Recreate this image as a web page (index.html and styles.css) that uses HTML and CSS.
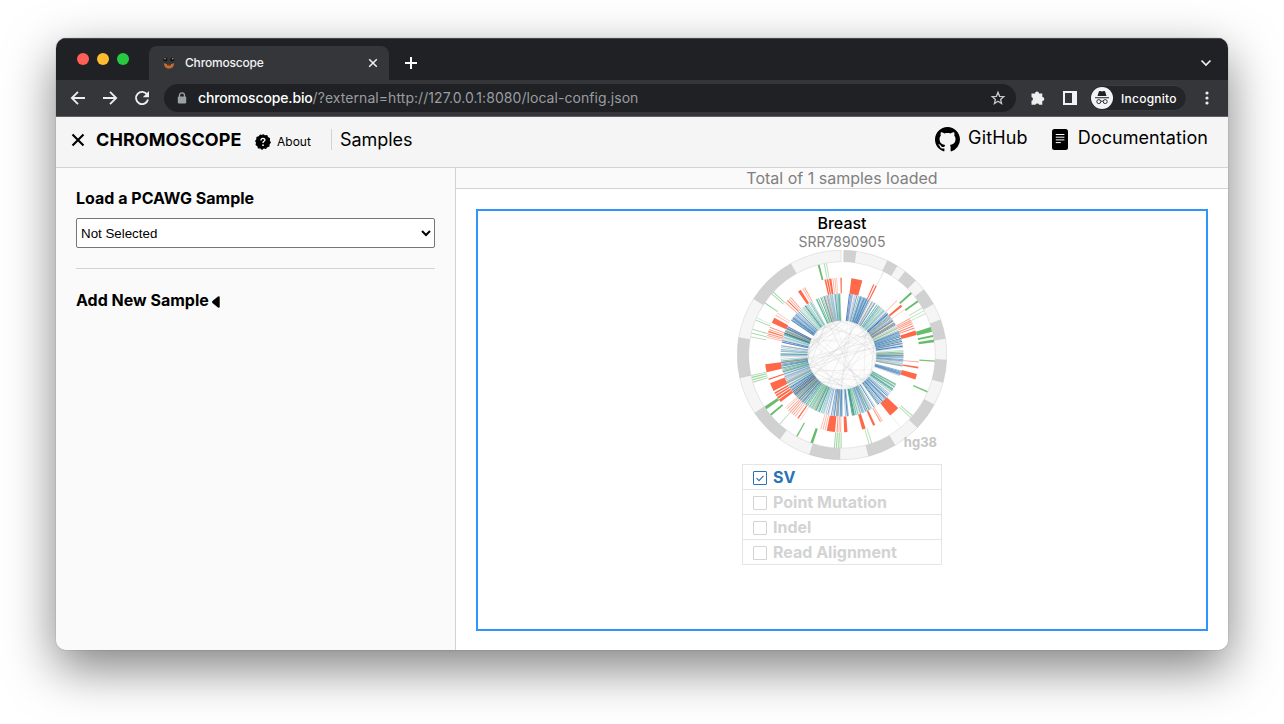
FILE: index.html
```html
<!DOCTYPE html>
<html lang="en">
<head>
<meta charset="utf-8">
<title>Chromoscope</title>
<link rel="stylesheet" href="styles.css">
</head>
<body>
<div class="window">
  <div class="tabstrip">
    <div class="lights"><i class="light red"></i><i class="light amber"></i><i class="light green"></i></div>
    <div class="tab">
      <svg class="favicon" width="14" height="14" viewBox="0 0 14 14"><circle cx="3.3" cy="3.5" r="2" fill="#111"/><circle cx="10.4" cy="3.5" r="2" fill="#111"/><circle cx="3" cy="2.8" r=".8" fill="#a5b1bb"/><circle cx="10.8" cy="2.8" r=".8" fill="#a5b1bb"/><path d="M2 7l2 1h6l2-1c0 4-2 5.500-5 5.500S2 11 2 7z" fill="#c56c35"/><path d="M5 8h4v1.500H5z" fill="#54382a"/></svg>
      <span class="tab-title">Chromoscope</span>
      <svg width="10" height="10" viewBox="0 0 10 10"><path d="M1.200 1.200l7.600 7.600M8.800 1.200L1.200 8.800" stroke="#f1f1f1" stroke-width="1.500"/></svg>
    </div>
    <svg class="newtab" width="14" height="14" viewBox="0 0 14 14"><path d="M7 1v12M1 7h12" stroke="#fff" stroke-width="2"/></svg>
    <svg class="tabsearch" width="12" height="8" viewBox="0 0 12 8"><path d="M1.500 1.500L6 6l4.500-4.500" fill="none" stroke="#eee" stroke-width="1.700"/></svg>
  </div>
  <div class="toolbar">
    <svg width="16" height="16" viewBox="0 0 16 16"><path d="M15 8H2M8 1.800L1.800 8 8 14.200" fill="none" stroke="#eee" stroke-width="1.800"/></svg>
    <svg width="16" height="16" viewBox="0 0 16 16"><path d="M1 8h13M8 1.800L14.200 8 8 14.200" fill="none" stroke="#eee" stroke-width="1.800"/></svg>
    <svg width="16" height="16" viewBox="0 0 16 16"><path d="M13.200 4.600A6.100 6.100 0 1 0 14 9.500" fill="none" stroke="#eee" stroke-width="1.900"/><path d="M15 1v6.200H8.800z" fill="#eee"/></svg>
    <div class="address">
      <svg width="10" height="12" viewBox="0 0 10 12"><path d="M2.500 5V3.300a2.500 2.500 0 0 1 5 0V5" fill="none" stroke="#9aa0a6" stroke-width="1.300"/><rect x=".8" y="4.500" width="8.400" height="7" rx="1" fill="#9aa0a6"/></svg>
      <span class="url"><b>chromoscope.bio</b>/?external=http://127.0.0.1:8080/local-config.json</span>
      <svg width="16" height="16" viewBox="0 0 16 16"><path d="M8 2.300l1.600 4 4.200.3-3.200 2.800 1 4.100L8 11.300l-3.600 2.200 1-4.100-3.200-2.800 4.200-.3z" fill="none" stroke="#c4c7c9" stroke-width="1.300"/></svg>
    </div>
    <svg class="ext" width="16" height="16" viewBox="0 0 16 16"><path d="M2.500 3.500H5a2 2 0 1 1 4 0h3.300v3.600a2 2 0 1 1 0 4v3.700H9.200a2 2 0 0 0-3.800 0H1.500v-4a1.900 1.900 0 0 0 0-3.700V3.500z" fill="#eee"/></svg>
    <svg class="panel" width="14" height="14" viewBox="0 0 14 14"><path d="M0 0h14v14H0zM2 2v10h7V2z" fill="#f1f3f4" fill-rule="evenodd"/></svg>
    <div class="incognito">
      <svg width="22" height="22" viewBox="0 0 22 22"><circle cx="11" cy="11" r="11" fill="#f1f3f4"/><path d="M4 10.300h14v1H4zM6.500 9l1.300-4.300q.3-1 1.300-.6l1.900.5 1.900-.5q1-.4 1.300.6L15.500 9z" fill="#202124"/><g fill="none" stroke="#202124" stroke-width=".9"><circle cx="7.800" cy="14.600" r="2"/><circle cx="14.200" cy="14.600" r="2"/><path d="M9.800 14.400q1.200-.8 2.400 0"/></g></svg>
      <span>Incognito</span>
    </div>
    <svg class="more" width="4" height="14" viewBox="0 0 4 14" fill="#eee"><circle cx="2" cy="2" r="1.600"/><circle cx="2" cy="7" r="1.600"/><circle cx="2" cy="12" r="1.600"/></svg>
  </div>
  <header class="header">
    <svg class="close" width="14" height="14" viewBox="0 0 14 14"><path d="M1.500 1.500l11 11M12.500 1.500l-11 11" stroke="#000" stroke-width="2.100"/></svg>
    <span class="brand">CHROMOSCOPE</span>
    <svg class="help" width="16" height="16" viewBox="0 0 16 16"><path d="M8 0l1.900 1.200 2.300-.2.900 2.100 2 1.100-.3 2.300L16 8.400l-1.400 1.800-.1 2.300-2.200.7L11 15l-2.200-.4L7 16l-1.700-1.500-2.300-.1-.7-2.200L.5 11l.5-2.200L0 7l1.300-1.800.1-2.300 2.200-.7L5.100.6l2.100.5z"/><path d="M6 6.400C6 3.800 10 4 9.900 6c-.1 1.300-1.900 1.400-1.900 2.900" fill="none" stroke="#fff" stroke-width="1.300"/><circle cx="8" cy="11.200" r=".9" fill="#fff"/></svg>
    <span class="about">About</span>
    <span class="samples">Samples</span>
    <div class="links">
      <svg width="25" height="25" viewBox="0 0 16 16"><path fill-rule="evenodd" d="M8 0C3.580 0 0 3.580 0 8c0 3.540 2.290 6.530 5.470 7.590.4.070.55-.17.55-.38 0-.19-.01-.82-.01-1.490-2.010.37-2.530-.49-2.690-.94-.09-.23-.48-.94-.82-1.130-.28-.15-.68-.52-.01-.53.63-.01 1.080.58 1.230.82.72 1.210 1.870.87 2.330.66.07-.52.28-.87.51-1.070-1.780-.2-3.640-.89-3.640-3.950 0-.87.31-1.590.82-2.150-.08-.2-.36-1.020.08-2.120 0 0 .67-.21 2.200.82.64-.18 1.320-.27 2-.27s1.360.09 2 .27c1.530-1.040 2.200-.82 2.200-.82.44 1.100.16 1.920.08 2.120.51.56.82 1.270.82 2.150 0 3.070-1.870 3.750-3.650 3.950.29.25.54.73.54 1.480 0 1.070-.01 1.930-.01 2.200 0 .21.15.46.55.38A8.010 8.010 0 0 0 16 8c0-4.420-3.580-8-8-8z"/></svg>
      <span class="gh">GitHub</span>
      <svg class="doc" width="16" height="21" viewBox="0 0 16 21"><rect width="16" height="21" rx="2.500"/><path d="M3.800 5.500h8.600M3.800 8.200h8.600M3.800 10.900h8.600M3.800 13.600h5" stroke="#fff" stroke-width="1"/></svg>
      <span class="docs">Documentation</span>
    </div>
  </header>
  <div class="content">
    <aside class="sidebar">
      <h2 class="load">Load a PCAWG Sample</h2>
      <select class="select"><option>Not Selected</option></select>
      <hr class="rule">
      <h2 class="add">Add New Sample <svg width="8" height="12" viewBox="0 0 8 12"><path d="M0 6.200Q0 5.500 1 4.600L6 .5Q7.700-.4 7.700 1.500v9q0 1.700-1.700 1L1 7.500Q0 6.700 0 6.200z"/></svg></h2>
    </aside>
    <main class="main">
      <div class="total">Total of 1 samples loaded</div>
      <div class="gallery">
        <section class="card">
          <div class="cancer">Breast</div>
          <div class="sample">SRR7890905</div>
          <div class="plot">
            <svg id="circos" width="210" height="212" viewBox="-105 -105 210 212"></svg>
            <span class="assembly">hg38</span>
          </div>
          <ul class="tracks">
            <li class="on"><svg width="14" height="14" viewBox="0 0 14 14"><rect x=".5" y=".5" width="13" height="13" rx=".5" fill="none" stroke="#2a73b5"/><path d="M3.500 7.100l2.500 2.500 4.500-4.800" fill="none" stroke="#2a73b5" stroke-width="1.200"/></svg>SV</li>
            <li><i class="box"></i>Point Mutation</li>
            <li><i class="box"></i>Indel</li>
            <li><i class="box"></i>Read Alignment</li>
          </ul>
        </section>
      </div>
    </main>
  </div>
</div>
<script src="circos.js"></script>
</body>
</html>
```

FILE: styles.css
```css
* { box-sizing: border-box; }
body { margin: 0; height: 724px; overflow: hidden; background: #fff; font-family: Inter, "Liberation Sans", sans-serif; color: #000; padding: 38px 56px 0; }
svg { display: block; flex: none; }
.window { width: 1172px; height: 612px; border-radius: 10px; overflow: hidden; display: flex; flex-direction: column; box-shadow: 0 0 1px rgba(0,0,0,.6), 0 18px 50px rgba(0,0,0,.5); }
.tabstrip { height: 42px; flex: none; background: #202124; display: flex; align-items: flex-end; border-top: 1px solid #47484a; }
.lights { display: flex; gap: 8px; padding-left: 21px; width: 93px; height: 27px; }
.light { width: 12px; height: 12px; border-radius: 50%; }
.red { background: #ff5f57; }
.amber { background: #febc2e; }
.green { background: #28c840; }
.tab { width: 240px; height: 34px; border-radius: 8px 8px 0 0; background: #35363a; display: flex; align-items: center; padding: 0 11px 0 13px; color: #f1f3f4; font-size: 12px; }
.tab-title { flex: 1; padding: 0 0 2px 9px; font-weight: 500; letter-spacing: -.18px; }
.newtab { margin: 0 auto 10px 15px; }
.tabsearch { margin: 0 16px 13px 0; }
.toolbar { height: 37px; flex: none; background: #35363a; border-bottom: 1px solid #5f6063; display: flex; align-items: center; padding: 0 19px 0 14px; gap: 16px; }
.address { width: 852px; flex: none; height: 28px; border-radius: 14px; background: #202124; display: flex; align-items: center; padding: 0 10px 0 13px; margin-left: -2px; }
.url { flex: 1; padding: 0 0 2px 11px; font-size: 14px; color: #9a9da0; letter-spacing: .06px; }
.url b { font-weight: 500; color: #fff; letter-spacing: -.15px; }
.ext { margin-left: -2px; }
.panel { margin-left: 1px; }
.incognito { height: 26px; width: 98px; flex: none; border: 1px solid #3b3c40; border-radius: 13px; background: #242528; display: flex; align-items: center; gap: 8px; color: #fff; font-size: 12px; font-weight: 500; letter-spacing: .25px; padding-left: 1px; margin-left: -4px; }
.more { margin-left: 2px; }
.header { height: 51px; flex: none; background: #f5f5f5; border-bottom: 1px solid #d3d3d3; display: flex; align-items: center; padding: 0 20px 5px 15px; }
.brand { font-size: 18px; font-weight: 700; margin-left: 11px; width: 159px; letter-spacing: .08px; }
.help { margin-top: 5px; }
.about { font-size: 12px; margin: 4px 0 0 6px; width: 54px; }
.samples { font-size: 18px; border-left: 1px solid #d3d3d3; padding-left: 8px; height: 21px; line-height: 21px; letter-spacing: -.05px; }
.links { margin-left: auto; display: flex; align-items: center; font-size: 18px; }
.gh { margin: -4px 24px 0 8px; letter-spacing: .15px; }
.docs { margin: -4px 0 0 10px; letter-spacing: .07px; }
.content { flex: 1; display: flex; min-height: 0; }
.sidebar { width: 400px; background: #fafafa; border-right: 1px solid #d3d3d3; padding: 20px; }
.load, .add { font-size: 16px; line-height: 20px; margin: 0; font-weight: 700; }
.select { display: block; width: 359px; height: 30px; margin: 10px 0 20px; font-family: "Liberation Sans", sans-serif; font-size: 13.333px; background: #fff; border: 1px solid #767676; border-radius: 2px; color: #000; }
.rule { border: 0; border-top: 1px solid #d3d3d3; margin: 0 0 21px; }
.add { display: flex; align-items: center; gap: 3px; }
.add svg { margin-top: 3px; }
.main { flex: 1; background: #fff; display: flex; flex-direction: column; }
.total { height: 21px; background: #fafafa; border-bottom: 1px solid #d3d3d3; text-align: center; color: #808080; font-size: 16px; line-height: 21px; }
.gallery { flex: 1; padding: 20px; }
.card { width: 732px; height: 422px; border: 2px solid #2f94fb; display: flex; flex-direction: column; align-items: center; }
.cancer { font-size: 16px; line-height: 20px; height: 21px; margin-top: 2px; font-weight: 500; }
.sample { font-size: 14px; line-height: 16px; height: 16px; color: #808080; }
.plot { position: relative; width: 210px; height: 214px; }
.assembly { position: absolute; right: 10px; top: 184px; font-size: 13px; line-height: 16px; font-weight: 700; color: #c5c5c5; }
.tracks { list-style: none; margin: 0; padding: 0; width: 200px; border: 1px solid #e5e5e5; border-bottom: 0; font-size: 16px; font-weight: 700; color: #d3d3d3; }
.tracks li { height: 25px; border-bottom: 1px solid #e5e5e5; display: flex; align-items: center; gap: 6px; padding-left: 10px; }
.tracks .on { color: #2a73b5; }
.box { width: 14px; height: 14px; border: 1px solid #d3d3d3; border-radius: 1px; margin-top: 1px; }
.on svg { margin-top: 1px; }
```

FILE: circos.js
```js
const svg = document.getElementById('circos');
const NS = 'http://www.w3.org/2000/svg';
const pt = (r, deg) => {
  const a = deg * Math.PI / 180;
  return (r * Math.sin(a)).toFixed(2) + ' ' + (-r * Math.cos(a)).toFixed(2);
};
function add(tag, attrs) {
  const el = document.createElementNS(NS, tag);
  for (const k in attrs) el.setAttribute(k, attrs[k]);
  svg.appendChild(el);
}
// Annular sector between two radii, angles clockwise from the top.
function arc(r0, r1, a0, a1, fill, opacity = 1, stroke = 'none') {
  add('path', {
    d: `M${pt(r1, a0)}A${r1} ${r1} 0 0 1 ${pt(r1, a1)}L${pt(r0, a1)}A${r0} ${r0} 0 0 0 ${pt(r0, a0)}Z`,
    fill, opacity, stroke, 'stroke-width': .4
  });
}
// Straight-sided line of constant width across the inner track.
function ray(a, width, stroke, opacity) {
  add('path', { d: `M${pt(34.3, a)}L${pt(61.5, a)}`, stroke, opacity, 'stroke-width': width, fill: 'none' });
}
let seed = 37;
const rnd = () => (seed = (seed * 16807) % 2147483647) / 2147483647;

// Chromosome lengths in Mb, chr1..chr22, X, Y, running counter-clockwise.
const chr = [248.9, 242.2, 198.3, 190.2, 181.5, 170.8, 159.3, 145.1, 138.4, 133.8, 135.1, 133.3, 114.4, 107, 102, 90.3, 83.3, 80.4, 58.6, 64.4, 46.7, 50.8, 156, 57.2];
const total = chr.reduce((a, b) => a + b);
let end = 359.5;
chr.forEach((len, i) => {
  const start = end - len / total * 358.5;
  arc(93.3, 104.8, start, end, i % 2 ? '#d1d1d1' : '#f5f5f5', 1, '#c4c4c4');
  end = start;
});

// [centre angle, width, opacity]
const green = [[26.5,.5,.3],[48.2,1.4,1],[54.7,1.3,1],[59.5,.5,.5],[61.6,.5,.5],[63.6,.5,.5],[74,3,1],[78.2,1.3,1],[81.2,1.7,1],[93.8,.8,.9],[113.3,.9,.9],[130.8,.7,.5],[132.3,.6,.5],[141,.4,.2],[161.3,.6,.5],[163,.6,.5],[180.6,.8,.5],[182,.8,.6],[183.4,.8,.6],[184.7,.7,.6],[199,1.7,1],[209,.9,.9],[222,.5,.5],[230,1.3,1],[235.3,2,1],[253,.7,.6],[254.5,.7,.6],[256,.8,.6],[257.3,.6,.5],[281.3,.5,.6],[283.6,.6,.7],[286,.6,.7],[292,.6,.6],[293.5,.4,.4],[304,.6,.7],[311,.6,.6],[312.5,.6,.6],[345.5,1.2,1],[349,.7,.5],[350.4,.6,.5]];
green.forEach(([a, w, o]) => arc(77.5, 93, a - w / 2, a + w / 2, '#68bd6c', o));

const red = [[11.1,8.3,1],[24.3,.9,1],[26.3,1,1],[45.3,.7,.4],[50.3,1.7,1],[54,.4,.4],[61.8,.8,.6],[63.2,.8,.7],[64.5,.8,.7],[66,.8,.7],[67.8,.9,.8],[69.5,.8,.8],[73.3,3.5,1],[95.2,.7,.6],[99.4,1.2,1],[106.3,4.3,1],[137.4,8.2,1],[148.5,.7,.5],[150,1,.6],[155.4,1.7,1],[163.5,2.7,1],[177.2,2.5,1],[181,.7,.6],[182.3,.7,.6],[183.7,.8,.7],[188.3,6.2,1],[192.7,.7,.5],[194.3,.7,.5],[196,.6,.5],[212.5,.5,.4],[214.8,1,1],[217.4,.7,.5],[219,.7,.6],[220.6,.8,.6],[222.2,.8,.6],[223.8,.8,.6],[225.6,.6,.5],[227,.5,.4],[233.6,2.3,1],[236.3,1.7,1],[238.4,1.3,1],[240.4,1.2,1],[245.4,6.2,1],[251.7,1,1],[260.2,6,1],[283.2,.7,.5],[284.6,.7,.6],[286,.8,.7],[287.7,1,.9],[289.3,.7,.6],[291,.7,.7],[296.8,4.2,1],[301,.6,.5],[303,.6,.4],[313,.8,.6],[315,.9,1],[316.7,.7,.6],[318.2,.7,.6],[326.5,2.4,1],[329.5,.7,.5],[331,.8,.6],[347.5,1.2,1],[349.2,1.2,1],[351.2,1.7,1],[353.2,.6,.6],[354.7,.6,.6],[356,.5,.5],[359.3,1,1]];
red.forEach(([a, w, o]) => arc(61.6, 77.3, a - w / 2, a + w / 2, '#ff6848', o));

// Variant clusters: [from, to, number of lines, palette]
const palettes = {
  b: ['#2f75ad', '#397cae', '#3f88bd', '#6b9fc6', '#4a70b4'],
  g: ['#3b9a82', '#45a986', '#79c49c', '#397cae', '#5aa3b5'],
  m: ['#2f75ad', '#45a986', '#6b9fc6', '#3b9a82', '#4a70b4', '#b5a3d0', '#397cae'],
  d: ['#2f75ad', '#316ca5', '#4060ad', '#3b9a82', '#85709a', '#6b9fc6']
};
const clusters = [[7,10,5,'b'],[11,16,4,'m'],[17,26,15,'b'],[27,33,5,'m'],[34,46,15,'g'],[46,61,20,'d'],[62,66,4,'g'],[67,73,11,'b'],[74,83,9,'m'],[84,89,3,'g'],[90,101,12,'m'],[105,110,7,'b'],[118,128,12,'g'],[129,143,18,'b'],[144,149,3,'m'],[150,163,14,'m'],[163,171,9,'g'],[173,177,4,'b'],[179,189,11,'b'],[190,201,8,'m'],[201,213,17,'g'],[213,220,7,'m'],[219,237,32,'d'],[237,255,21,'m'],[255,266,10,'m'],[267,280,10,'m'],[281,291,10,'m'],[290,298,13,'d'],[304,315,19,'b'],[316,331,16,'g'],[334,342,7,'g'],[343,352,10,'m'],[352,359,9,'g']];
clusters.forEach(([from, to, n, key]) => {
  const colors = palettes[key], step = (to - from) / n;
  for (let i = 0; i < n; i++) {
    ray(from + (i + rnd() * 1.1) * step, .35 + rnd() * .65, colors[Math.floor(rnd() * colors.length)], .7 + rnd() * .3);
  }
});
[29.5, 52, 56.5, 59, 64.5, 89, 99.5, 184.5, 206.8, 223, 228, 231, 244, 263, 293, 342.5, 346].forEach(a => ray(a, .6, '#c9a04b', .9));

add('circle', { r: 34, fill: '#fdfdfd', stroke: '#e6e6e6', 'stroke-width': .5 });
for (let i = 0; i < 60; i++) {
  const a = rnd() * 360, b = a + 20 + rnd() * 165;
  add('path', { d: `M${pt(34, a)}L${pt(34, b)}`, stroke: '#c4c4c4', 'stroke-width': .6, opacity: .25 + rnd() * .3, fill: 'none' });
}
```
